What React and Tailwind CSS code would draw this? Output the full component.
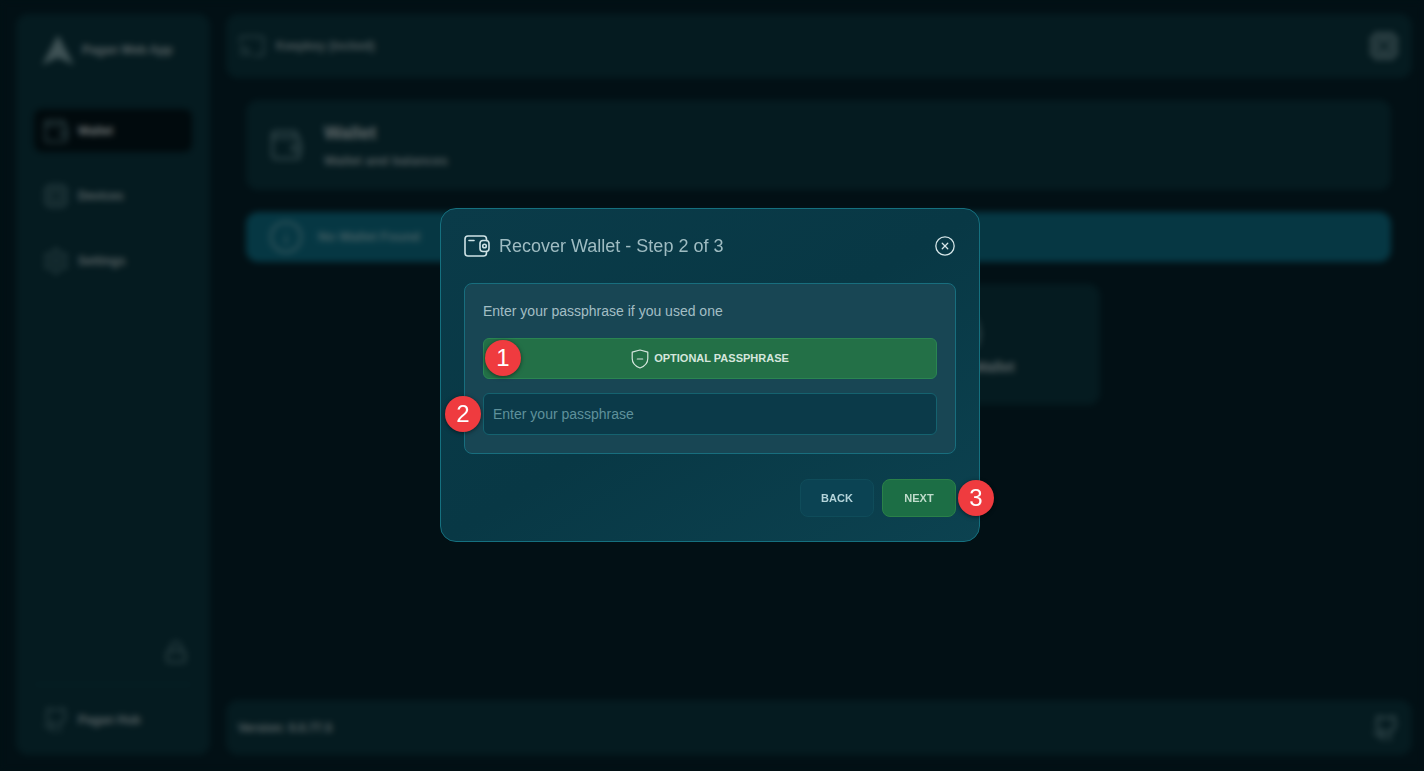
import { CircleX, Settings, Cpu, Info, Lock, Cast, Github, Wallet } from 'lucide-react'

function WalletIcon({ className }) {
  return (
    <svg className={className} viewBox="0 0 26 22" fill="none" stroke="currentColor" strokeWidth="1.6" strokeLinecap="round">
      <path d="M22.5 5.5V4a3 3 0 0 0-3-3H4a3 3 0 0 0-3 3v14a3 3 0 0 0 3 3h15.5a3 3 0 0 0 3-3v-1.5" />
      <rect x="16" y="5.5" width="9" height="11" rx="3" />
      <circle cx="20.5" cy="11" r="1.8" />
      <path d="M5 5.5h5" />
    </svg>
  )
}

function ShieldMinus({ className }) {
  return (
    <svg className={className} viewBox="0 0 18 20" fill="none" stroke="currentColor" strokeWidth="1.2" strokeLinecap="round" strokeLinejoin="round">
      <path d="M9 1 1.2 3.2v6.3c0 4.4 3.3 7.8 7.8 9.5 4.5-1.7 7.8-5.1 7.8-9.5V3.2Z" />
      <path d="M6.3 10h5.4" />
    </svg>
  )
}

function Logo({ className }) {
  return (
    <svg className={className} viewBox="0 0 30 28" fill="currentColor">
      <path d="M15 0 30 28 15 21 0 28Z" />
    </svg>
  )
}

function NavItem({ icon: Icon, label, active }) {
  return (
    <div className={`flex items-center gap-2 h-[43px] px-2 rounded-lg ${active ? 'bg-[#02141a]' : ''}`}>
      <Icon className="w-7 h-7 text-[#5f8b92]" strokeWidth={1.5} />
      <span className={`text-xs font-bold ${active ? 'text-[#e5f0f2]' : 'text-[#b5c8cc]'}`}>{label}</span>
    </div>
  )
}

function Badge({ n, className }) {
  return (
    <div className={`absolute w-9 h-9 rounded-full bg-[#ef3b3f] text-white text-[24px] flex items-center justify-center shadow-[0_1px_4px_rgba(0,0,0,0.5)] ${className}`}>
      {n}
    </div>
  )
}

export default function App() {
  return (
    <div className="relative h-[771px] overflow-hidden bg-[#04202a] font-['Liberation_Sans',Arial,sans-serif]">
      <div className="flex gap-4 h-full pl-4 pr-3 pt-[14px] pb-4">
        {/* sidebar */}
        <aside className="w-[194px] shrink-0 flex flex-col bg-[#0a3640] rounded-xl px-[18px]">
          <div className="flex items-center gap-2 h-[72px] px-2">
            <Logo className="w-8 h-8 text-[#7fa5ab]" />
            <span className="text-xs font-bold text-[#b5c8cc]">Pagan Web App</span>
          </div>
          <div className="flex flex-col gap-[22px] mt-[23px]">
            <NavItem icon={Wallet} label="Wallet" active />
            <NavItem icon={Cpu} label="Devices" />
            <NavItem icon={Settings} label="Settings" />
          </div>
          <div className="mt-auto flex justify-end pr-1 pb-[20px] border-b border-[#114a55]">
            <Lock className="w-6 h-6 text-[#5f8b92]" />
          </div>
          <div className="h-[70px] flex items-center">
            <NavItem icon={Github} label="Pagan Hub" />
          </div>
        </aside>

        <div className="flex-1 flex flex-col min-w-0">
          {/* header */}
          <header className="h-16 flex items-center justify-between bg-[#0a3640] rounded-xl pl-3 pr-3">
            <div className="flex items-center gap-[10px]">
              <Cast className="w-7 h-7 text-[#5f8b92]" strokeWidth={1.5} />
              <span className="text-xs font-bold text-[#9db4b9]">Keepkey (locked)</span>
            </div>
            <Cpu className="w-8 h-8 text-[#7fa5ab]" />
          </header>

          <main className="flex-1 flex flex-col pl-5 pr-[21px] pt-[22px]">
            <div className="h-[90px] shrink-0 flex items-center gap-5 bg-[#0a3640] rounded-xl px-[22px]">
              <Wallet className="w-9 h-9 text-[#6f9aa1]" strokeWidth={1.5} />
              <div>
                <div className="text-lg font-bold text-[#c7d6d9]">Wallet</div>
                <div className="text-[13px] font-bold text-[#a5babf] mt-1">Wallet and balances</div>
              </div>
            </div>

            <div className="h-[50px] shrink-0 flex items-center gap-[14px] bg-[#0c6f87] rounded-xl px-[22px] mt-[22px]">
              <Info className="w-9 h-9 text-[#6fb0bd]" strokeWidth={1.5} />
              <span className="text-[13px] font-bold text-[#8fc0ca]">No Wallet Found</span>
            </div>

            <div className="flex justify-center gap-5 mt-[22px] pl-[1px]">
              <div className="w-[271px] h-[121px] bg-[#0a3640] rounded-xl" />
              <div className="w-[271px] h-[121px] bg-[#0a3640] rounded-xl flex flex-col items-center justify-center gap-2">
                <Wallet className="w-9 h-9 text-[#6f9aa1]" strokeWidth={1.5} />
                <span className="text-sm font-bold text-[#b5c8cc]">Recover Wallet</span>
              </div>
            </div>
          </main>

          {/* footer */}
          <footer className="h-[55px] flex items-center justify-between bg-[#0a3640] rounded-xl px-3">
            <span className="text-xs font-bold text-[#b5c8cc]">Version: 0.0.77.5</span>
            <Github className="w-7 h-7 text-[#6f9aa1]" />
          </footer>
        </div>
      </div>

      {/* overlay */}
      <div className="absolute inset-0 bg-black/50 backdrop-blur-[3px] flex items-start justify-center pt-[208px] pr-[4px]">
        <div className="relative w-[540px] h-[334px] rounded-2xl border border-[#15707f] bg-gradient-to-br from-[#0a3b49] via-[#083845] to-[#0c4250] px-[23px] flex flex-col">
          <div className="flex items-center justify-between h-[74px] shrink-0">
            <div className="flex items-center gap-[9px]">
              <WalletIcon className="w-[26px] h-[22px] text-[#cfe3e6]" />
              <h2 className="text-lg text-[#9fbcc2]">Recover Wallet - Step 2 of 3</h2>
            </div>
            <CircleX className="w-[22px] h-[22px] text-[#d6e6e8]" strokeWidth={1.4} />
          </div>

          <div className="h-[171px] rounded-lg border border-[#186e7e] bg-[#184654] px-[18px] flex flex-col">
            <p className="text-sm text-[#a3bec4] h-[54px] pt-[19px] leading-[16px]">Enter your passphrase if you used one</p>
            <button className="h-[41px] shrink-0 flex items-center justify-center gap-[5px] rounded-md border border-[#2a8551] bg-[#237047] text-[11px] font-bold text-[#d5e6dd]">
              <ShieldMinus className="w-[18px] h-5 text-[#d5e6dd]" />
              OPTIONAL PASSPHRASE
            </button>
            <input
              className="mt-[14px] h-[42px] shrink-0 rounded-md border border-[#15626f] bg-[#0b3a49] px-[9px] text-sm text-[#c7d6d9] placeholder:text-[#5f919b] outline-none"
              placeholder="Enter your passphrase"
            />
          </div>

          <div className="flex justify-end gap-2 mt-[25px]">
            <button className="w-[74px] h-[38px] rounded-lg border border-[#0f4c5a] bg-[#0b4353] text-[11px] font-bold text-[#b4d4da]">BACK</button>
            <button className="w-[74px] h-[38px] rounded-lg border border-[#2a8048] bg-[#1c6e45] text-[11px] font-bold text-[#bfdccb]">NEXT</button>
          </div>

          <Badge n="1" className="left-[44px] top-[131px]" />
          <Badge n="2" className="left-[4px] top-[187px]" />
          <Badge n="3" className="left-[517px] top-[271px]" />
        </div>
      </div>
    </div>
  )
}
